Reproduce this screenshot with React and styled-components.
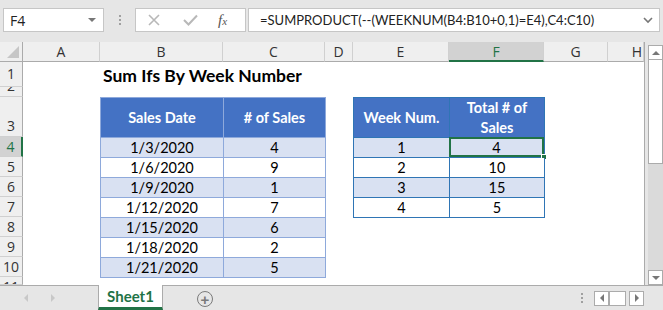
import React from 'react';
import styled, { createGlobalStyle, css } from 'styled-components';

const GlobalStyle = createGlobalStyle`
  html, body {
    margin: 0;
    padding: 0;
    background: #e6e6e6;
    overflow: hidden;
  }
  * {
    box-sizing: border-box;
  }
`;

const Window = styled.div`
  width: 663px;
  height: 310px;
  display: flex;
  flex-direction: column;
  background: #e6e6e6;
  font-family: 'Open Sans', 'Segoe UI', sans-serif;
`;

const FormulaBar = styled.div`
  height: 42px;
  display: flex;
  align-items: flex-start;
  padding: 8px 0 0 3px;
`;

const NameBox = styled.div`
  width: 101px;
  height: 24px;
  background: #fff;
  border: 1px solid #c6c6c6;
  display: flex;
  align-items: center;
  justify-content: space-between;
  padding: 0 7px 0 6px;
  font-size: 14px;
  color: #222;
`;

const Caret = styled.span`
  width: 0;
  height: 0;
  border-left: 4px solid transparent;
  border-right: 4px solid transparent;
  border-top: 4px solid #777;
`;

const Grip = styled.div`
  width: 31px;
  height: 24px;
  display: flex;
  flex-direction: column;
  align-items: center;
  justify-content: center;
  gap: 2px;

  span {
    width: 2px;
    height: 2px;
    background: #a0a0a0;
  }
`;

const FxBox = styled.div`
  width: 111px;
  height: 24px;
  background: #fff;
  border: 1px solid #c6c6c6;
  display: flex;
  align-items: center;
  padding-left: 12px;
  gap: 18px;
`;

const Fx = styled.span`
  font-family: 'Liberation Serif', serif;
  font-style: italic;
  font-size: 15px;
  color: #555;
  margin-left: 2px;

  sub {
    font-size: 11px;
    vertical-align: baseline;
  }
`;

const FormulaInput = styled.div`
  margin-left: 2px;
  width: 412px;
  height: 24px;
  background: #fff;
  border: 1px solid #c6c6c6;
  display: flex;
  align-items: center;
  justify-content: space-between;
  padding: 0 6px 0 11px;
  font-family: Lato, 'Open Sans', sans-serif;
  font-size: 13px;
  color: #222;
  white-space: nowrap;
`;

const Main = styled.div`
  display: flex;
  height: 243px;
`;

const Sheet = styled.div`
  width: 645px;
  display: grid;
  grid-template-columns: 23px 77px 123px 102px 28px 96px 95px 64px 36px;
  grid-template-rows: 20px 25px 10px 40px repeat(7, 20px) 8px;
  background: #fff;
  border-right: 1px solid #ababab;
  overflow: hidden;
`;

const Corner = styled.div`
  grid-column: 1;
  grid-row: 1;
  background: #efefef;
  border-right: 1px solid #ababab;
  border-bottom: 1px solid #ababab;
  position: relative;

  &::after {
    content: '';
    position: absolute;
    right: 3px;
    bottom: 3px;
    border-left: 12px solid transparent;
    border-bottom: 12px solid #c6c6c6;
  }
`;

const ColHead = styled.div`
  grid-row: 1;
  grid-column: ${({ $col }) => $col};
  background: ${({ $active }) => ($active ? '#d2d2d2' : '#efefef')};
  color: ${({ $active }) => ($active ? '#217346' : '#333')};
  border-right: 1px solid #d0d0d0;
  border-bottom: ${({ $active }) => ($active ? '2px solid #217346' : '1px solid #ababab')};
  display: flex;
  align-items: center;
  justify-content: ${({ $edge }) => ($edge ? 'flex-end' : 'center')};
  padding-right: ${({ $edge }) => ($edge ? '1px' : '0')};
  font-size: 14px;
  overflow: hidden;
`;

const RowHead = styled.div`
  grid-column: 1;
  grid-row: ${({ $row }) => $row};
  background: ${({ $active }) => ($active ? '#d2d2d2' : '#efefef')};
  color: ${({ $active }) => ($active ? '#217346' : '#333')};
  border-right: ${({ $active }) => ($active ? '2px solid #217346' : '1px solid #ababab')};
  border-bottom: 1px solid #d0d0d0;
  display: flex;
  align-items: ${({ $align }) => $align || 'center'};
  justify-content: center;
  font-size: 14px;
  line-height: 20px;
  overflow: hidden;
`;

const Title = styled.div`
  grid-column: 3 / 7;
  grid-row: 2;
  padding: 0 0 1px 3px;
  display: flex;
  align-items: flex-end;
  font-family: Lato, 'Liberation Sans', sans-serif;
  font-weight: 700;
  font-size: 17.5px;
  color: #000;
  white-space: nowrap;
`;

const Table = styled.div`
  grid-column: ${({ $cols }) => $cols};
  grid-row: ${({ $rows }) => $rows};
  display: grid;
  grid-template-columns: ${({ $template }) => $template};
  grid-template-rows: 40px;
  grid-auto-rows: 20px;
  border-left: 1px solid ${({ $line }) => $line};
  border-top: 1px solid ${({ $line }) => $line};
  margin-right: -1px;
  margin-bottom: -1px;
  font-family: Lato, 'Liberation Sans', sans-serif;
  font-size: 14.5px;
`;

const Cell = styled.div`
  position: relative;
  display: flex;
  align-items: center;
  justify-content: center;
  text-align: center;
  border-right: 1px solid ${({ $line }) => $line};
  border-bottom: 1px solid ${({ $line }) => $line};
  background: ${({ $band }) => ($band ? '#d9e1f2' : '#fff')};
  color: #000;

  ${({ $head }) =>
    $head &&
    css`
      background: #4472c4;
      color: #fff;
      font-weight: 700;
      line-height: 20px;
    `}

  ${({ $selected }) =>
    $selected &&
    css`
      box-shadow: inset 0 0 0 2px #217346;
      margin: -1px 0 0 -1px;
    `}
`;

const Handle = styled.span`
  position: absolute;
  right: -3px;
  bottom: -3px;
  width: 6px;
  height: 6px;
  background: #217346;
  border: 1px solid #fff;
`;

const VScroll = styled.div`
  width: 18px;
  padding: 3px 0 0 3px;
  display: flex;
  flex-direction: column;
`;

const ScrollBtn = styled.div`
  width: 15px;
  height: 15px;
  background: #fff;
  border: 1px solid #ababab;
  display: flex;
  align-items: center;
  justify-content: center;
`;

const Thumb = styled.div`
  width: 15px;
  height: 104px;
  background: #fff;
  border: 1px solid #ababab;
  border-top: none;
`;

const Track = styled.div`
  flex: 1;
  background: #dadada;
`;

const Arrow = styled.span`
  width: 0;
  height: 0;
  ${({ $dir, $color = '#777', $size = 4 }) => {
    const t = `${$size}px solid transparent`;
    const c = `${$size}px solid ${$color}`;
    if ($dir === 'up') return css`border-left: ${t}; border-right: ${t}; border-bottom: ${c};`;
    if ($dir === 'down') return css`border-left: ${t}; border-right: ${t}; border-top: ${c};`;
    if ($dir === 'left') return css`border-top: ${t}; border-bottom: ${t}; border-right: ${c};`;
    return css`border-top: ${t}; border-bottom: ${t}; border-left: ${c};`;
  }}
`;

const TabBar = styled.div`
  height: 25px;
  border-top: 1px solid #ababab;
  display: flex;
  align-items: stretch;
`;

const TabNav = styled.div`
  width: 98px;
  display: flex;
  align-items: center;
  padding-left: 24px;
  gap: 23px;
`;

const SheetTab = styled.div`
  width: 65px;
  margin-top: -1px;
  background: #fff;
  border-left: 1px solid #ababab;
  border-right: 1px solid #ababab;
  border-bottom: 3px solid #217346;
  display: flex;
  align-items: center;
  justify-content: center;
  font-family: Lato, 'Liberation Sans', sans-serif;
  font-weight: 700;
  font-size: 15px;
  color: #217346;
`;

const AddSheet = styled.div`
  margin: 5px 0 0 34px;
  width: 16px;
  height: 16px;
  border-radius: 50%;
  border: 1.5px solid #7a7a7a;
  display: flex;
  align-items: center;
  justify-content: center;
  font-family: 'Liberation Sans', sans-serif;
  font-size: 15px;
  font-weight: 700;
  color: #7a7a7a;
  line-height: 1;
`;

const Spacer = styled.div`
  flex: 1;
`;

const HDots = styled(Grip)`
  width: 8px;
  height: auto;
  margin-right: 8px;
`;

const HScrollNav = styled.div`
  display: flex;
  align-items: center;
  margin-right: 19px;
`;

const NavBtn = styled.div`
  width: ${({ $w }) => $w || 15}px;
  height: 15px;
  background: #fff;
  border: 1px solid #ababab;
  margin-left: ${({ $gap }) => $gap || 0}px;
  display: flex;
  align-items: center;
  justify-content: center;
`;

const columns = [
  { label: 'A' },
  { label: 'B' },
  { label: 'C' },
  { label: 'D' },
  { label: 'E' },
  { label: 'F', active: true },
  { label: 'G' },
  { label: 'H', edge: true },
];

// row 2 and row 11 are only partly visible, as in Excel
const rows = [
  { n: 1 },
  { n: 2, align: 'flex-end' },
  { n: 3, align: 'flex-end' },
  { n: 4, active: true },
  { n: 5 },
  { n: 6 },
  { n: 7 },
  { n: 8 },
  { n: 9 },
  { n: 10 },
  { n: 11, align: 'flex-start' },
];

const sales = [
  ['1/3/2020', 4],
  ['1/6/2020', 9],
  ['1/9/2020', 1],
  ['1/12/2020', 7],
  ['1/15/2020', 6],
  ['1/18/2020', 2],
  ['1/21/2020', 5],
];

const weeks = [
  [1, 4],
  [2, 10],
  [3, 15],
  [4, 5],
];

const LIGHT = '#8ea9db';
const DARK = '#2f75b5';

const App = () => {
  return (
    <>
      <GlobalStyle />
      <Window>
        <FormulaBar>
          <NameBox>
            F4
            <Caret />
          </NameBox>
          <Grip>
            <span />
            <span />
            <span />
          </Grip>
          <FxBox>
            <svg width="12" height="12" viewBox="0 0 12 12">
              <path d="M1 1 L11 11 M11 1 L1 11" stroke="#b8b8b8" strokeWidth="1.6" fill="none" />
            </svg>
            <svg width="15" height="12" viewBox="0 0 15 12" style={{ marginLeft: 5 }}>
              <path d="M1 6 L5.5 10.5 L14 1.5" stroke="#b8b8b8" strokeWidth="2" fill="none" />
            </svg>
            <Fx>
              f<sub>x</sub>
            </Fx>
          </FxBox>
          <FormulaInput>
            =SUMPRODUCT(--(WEEKNUM(B4:B10+0,1)=E4),C4:C10)
            <svg width="10" height="8" viewBox="0 0 10 8">
              <path d="M1 2 L5 6 L9 2" stroke="#777" strokeWidth="1.6" fill="none" />
            </svg>
          </FormulaInput>
        </FormulaBar>

        <Main>
          <Sheet>
            <Corner />
            {columns.map((c, i) => (
              <ColHead key={c.label} $col={i + 2} $active={c.active} $edge={c.edge}>
                {c.label}
              </ColHead>
            ))}
            {rows.map((r, i) => (
              <RowHead key={r.n} $row={i + 2} $active={r.active} $align={r.align}>
                {r.n}
              </RowHead>
            ))}

            <Title>Sum Ifs By Week Number</Title>

            <Table $cols="3 / 5" $rows="4 / 12" $template="123px 102px" $line={LIGHT}>
              <Cell $head $line={LIGHT}>Sales Date</Cell>
              <Cell $head $line={LIGHT}># of Sales</Cell>
              {sales.map(([date, count], i) => (
                <React.Fragment key={date}>
                  <Cell $line={LIGHT} $band={i % 2 === 0}>{date}</Cell>
                  <Cell $line={LIGHT} $band={i % 2 === 0}>{count}</Cell>
                </React.Fragment>
              ))}
            </Table>

            <Table $cols="6 / 8" $rows="4 / 9" $template="96px 95px" $line={DARK}>
              <Cell $head $line={DARK}>Week Num.</Cell>
              <Cell $head $line={DARK}>
                Total # of
                <br />
                Sales
              </Cell>
              {weeks.map(([week, total], i) => (
                <React.Fragment key={week}>
                  <Cell $line={DARK} $band={i % 2 === 0}>{week}</Cell>
                  <Cell $line={DARK} $band={i % 2 === 0} $selected={i === 0}>
                    {total}
                    {i === 0 && <Handle />}
                  </Cell>
                </React.Fragment>
              ))}
            </Table>
          </Sheet>

          <VScroll>
            <ScrollBtn>
              <Arrow $dir="up" />
            </ScrollBtn>
            <Thumb />
            <Track />
            <ScrollBtn>
              <Arrow $dir="down" />
            </ScrollBtn>
          </VScroll>
        </Main>

        <TabBar>
          <TabNav>
            <Arrow $dir="left" $color="#c8c8c8" />
            <Arrow $dir="right" $color="#c8c8c8" />
          </TabNav>
          <SheetTab>Sheet1</SheetTab>
          <AddSheet>+</AddSheet>
          <Spacer />
          <HDots>
            <span />
            <span />
            <span />
          </HDots>
          <HScrollNav>
            <NavBtn>
              <Arrow $dir="left" />
            </NavBtn>
            <NavBtn $w={17} />
            <NavBtn $gap={3}>
              <Arrow $dir="right" />
            </NavBtn>
          </HScrollNav>
        </TabBar>
      </Window>
    </>
  );
};

export default App;
